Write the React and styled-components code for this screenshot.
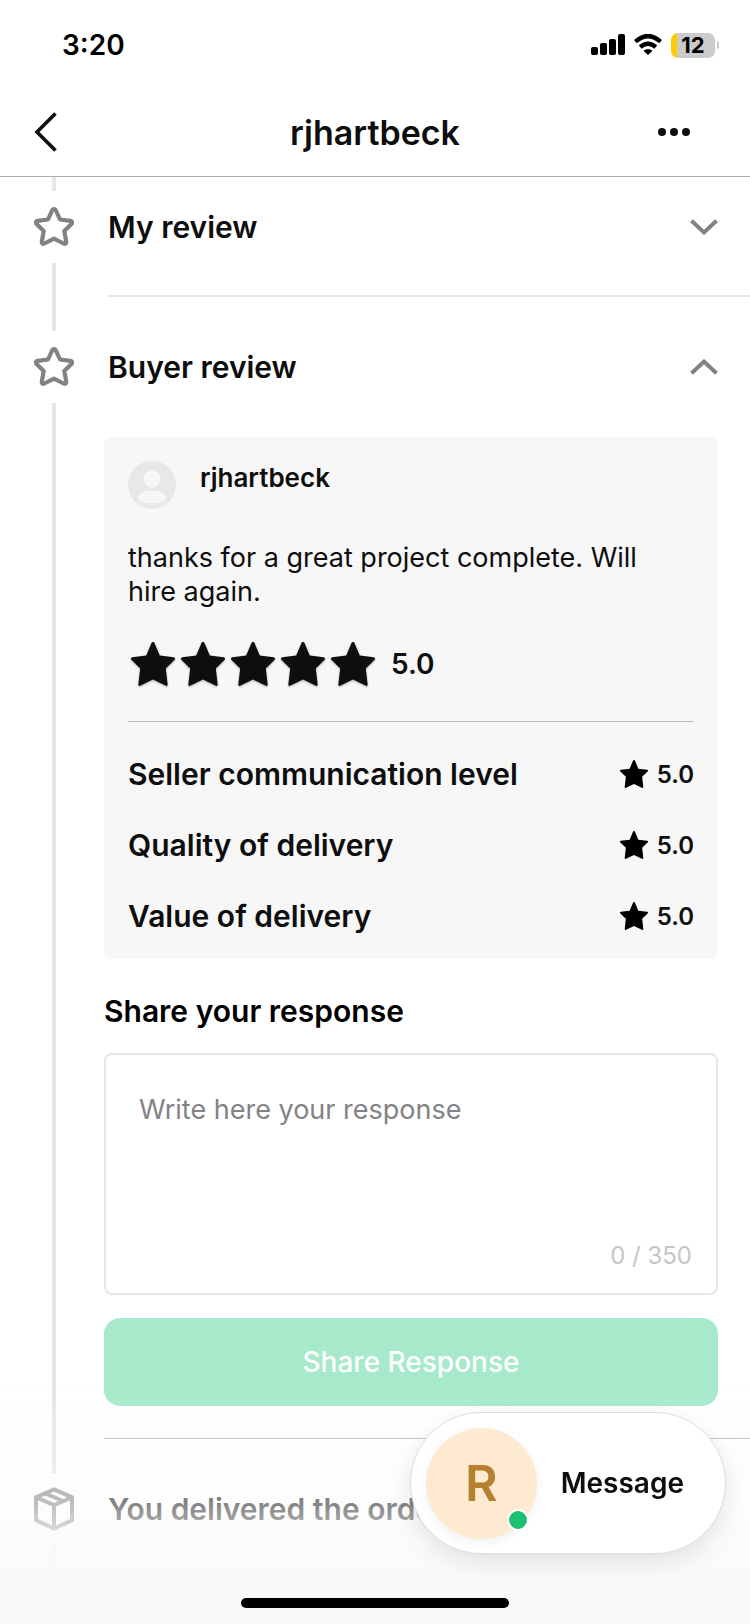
import React, { useState } from "react";
import styled, { createGlobalStyle } from "styled-components";

const theme = {
  text: "#0e0e0f",
  icon: "#808285",
  muted: "#818386",
  rule: "#e6e6e7",
  hairline: "#b9babb",
  card: "#f7f7f7",
  mint: "#a6eacb",
};

const STAR =
  "M20 2.2 C20.9 2.2 21.5 2.7 21.9 3.5 L26 12.5 L36.3 13.8 C38.2 14.1 38.7 15.8 37.4 17.1 L30.3 24 L32.2 34.6 C32.5 36.5 31.2 37.4 29.6 36.5 L20 31.6 L10.4 36.5 C8.8 37.4 7.5 36.5 7.8 34.6 L9.7 24 L2.6 17.1 C1.3 15.8 1.8 14.1 3.7 13.8 L14 12.5 L18.1 3.5 C18.5 2.7 19.1 2.2 20 2.2 Z";

const SOLID_STAR =
  "M22 0 C22.8 0 23.3 .5 23.6 1.2 L28.8 13.6 L42.6 15.3 C44.2 15.6 44.5 16.9 43.4 17.9 L34.8 26.4 L36.6 42 C36.8 43.6 35.9 44.4 34.4 43.6 L22 37.6 L9.6 43.6 C8.1 44.4 7.2 43.6 7.4 42 L9.2 26.4 L.6 17.9 C-.5 16.9 -.2 15.6 1.4 15.3 L15.2 13.6 L20.4 1.2 C20.7 .5 21.2 0 22 0 Z";

const ratings = [
  { label: "Seller communication level", score: "5.0" },
  { label: "Quality of delivery", score: "5.0" },
  { label: "Value of delivery", score: "5.0" },
];

const OutlineStar = () => (
  <svg width="40" height="40" viewBox="0 0 40 40" aria-hidden="true">
    <path d={STAR} fill="none" stroke={theme.icon} strokeWidth="4.2" strokeLinejoin="round" />
  </svg>
);

const SolidStar = ({ size, color }) => (
  <svg width={size} height={size} viewBox="0 0 44 44" aria-hidden="true">
    <path d={SOLID_STAR} fill={color} />
  </svg>
);

const BoxIcon = () => (
  <svg width="40" height="44" viewBox="0 0 40 44" fill="none" stroke={theme.icon} strokeWidth="4" aria-hidden="true">
    <path d="M20 2.4 L38 10.4 V33.2 L20 41.6 L2 33.2 V10.4 Z" />
    <path d="M2 10.4 L20 18 L38 10.4 M20 18 V41" />
    <path d="M10.5 6.2 L29 14" strokeWidth="4" />
  </svg>
);

const Chevron = ({ up }) => (
  <svg width="28" height="16" viewBox="0 0 28 16" aria-hidden="true">
    <path d={up ? "M1.5 14.2 L14 2.6 L26.5 14.2" : "M1.5 1.8 L14 13.4 L26.5 1.8"} fill="none" stroke={theme.icon} strokeWidth="4" />
  </svg>
);

const StatusBar = () => (
  <Status>
    <Time>3:20</Time>
    <StatusIcons>
      <svg width="34" height="22" viewBox="0 0 34 22" aria-hidden="true">
        <rect x="0" y="13" width="7" height="8" rx="2" />
        <rect x="9" y="9" width="7" height="12" rx="2" />
        <rect x="18" y="5" width="7" height="16" rx="2" />
        <rect x="27" y="0" width="7" height="21" rx="2" />
      </svg>
      <svg width="28" height="22" viewBox="0 0 28 22" fill="none" stroke="#000" strokeWidth="4.4" aria-hidden="true">
        <path d="M1.4 7.6 Q14 -3.4 26.6 7.6" />
        <path d="M6.2 13 Q14 6.4 21.8 13" />
        <path d="M14 21 L9.4 16.8 Q14 13.2 18.6 16.8 Z" fill="#000" stroke="none" />
      </svg>
      <Battery>
        <BatteryBody>12</BatteryBody>
        <BatteryTip />
      </Battery>
    </StatusIcons>
  </Status>
);

const App = () => {
  const [response, setResponse] = useState("");
  return (
    <Page>
      <GlobalStyle />
      <TopBar>
        <StatusBar />
        <NavRow>
          <IconButton aria-label="Back">
            <svg width="24" height="40" viewBox="0 0 24 40" aria-hidden="true">
              <path d="M21.5 1.5 L3 20 L21.5 38.5" fill="none" stroke={theme.text} strokeWidth="3.6" />
            </svg>
          </IconButton>
          <Title>rjhartbeck</Title>
          <MenuButton aria-label="More options">
            <svg width="32" height="8" viewBox="0 0 32 8" fill={theme.text} aria-hidden="true">
              <circle cx="4" cy="4" r="4" />
              <circle cx="16" cy="4" r="4" />
              <circle cx="28" cy="4" r="4" />
            </svg>
          </MenuButton>
        </NavRow>
      </TopBar>

      <Timeline>
        <LeadLine />
        <Step>
          <Rail>
            <RailIcon>
              <OutlineStar />
            </RailIcon>
            <RailLine />
          </Rail>
          <StepBody>
            <StepHeader aria-expanded="false">
              My review
              <Chevron />
            </StepHeader>
            <StepDivider />
          </StepBody>
        </Step>

        <Step>
          <Rail>
            <RailIcon>
              <OutlineStar />
            </RailIcon>
            <RailLine />
          </Rail>
          <StepBody>
            <StepHeader aria-expanded="true">
              Buyer review
              <Chevron up />
            </StepHeader>
            <Panel>
              <Card>
                <Reviewer>
                  <svg width="48" height="48" viewBox="0 0 48 48" aria-hidden="true">
                    <circle cx="24" cy="24" r="24" fill="#e8e8e9" />
                    <circle cx="24" cy="18" r="8.5" fill={theme.card} />
                    <ellipse cx="24" cy="36" rx="14" ry="6.5" fill={theme.card} />
                  </svg>
                  <ReviewerName>rjhartbeck</ReviewerName>
                </Reviewer>
                <Quote>thanks for a great project complete. Will hire again.</Quote>
                <Overall>
                  <Stars>
                    {[1, 2, 3, 4, 5].map((n) => (
                      <SolidStar key={n} size={44} color={theme.text} />
                    ))}
                  </Stars>
                  <OverallScore>5.0</OverallScore>
                </Overall>
                <Ratings>
                  {ratings.map((rating) => (
                    <RatingRow key={rating.label}>
                      <RatingLabel>{rating.label}</RatingLabel>
                      <RatingScore>
                        <SolidStar size={28} color="#000" />
                        {rating.score}
                      </RatingScore>
                    </RatingRow>
                  ))}
                </Ratings>
              </Card>
              <ResponseLabel htmlFor="response">Share your response</ResponseLabel>
              <ResponseBox>
                <ResponseInput
                  id="response"
                  maxLength={350}
                  placeholder="Write here your response"
                  value={response}
                  onChange={(e) => setResponse(e.target.value)}
                />
                <Counter>{response.length} / 350</Counter>
              </ResponseBox>
              <ShareButton disabled={!response}>Share Response</ShareButton>
            </Panel>
            <PanelDivider />
          </StepBody>
        </Step>

        <Step>
          <Rail>
            <RailIcon>
              <BoxIcon />
            </RailIcon>
            <RailLine />
          </Rail>
          <StepBody>
            <StepHeader>You delivered the order</StepHeader>
          </StepBody>
        </Step>
      </Timeline>

      <BottomFade />
      <MessageButton>
        <Avatar>
          R
          <OnlineDot />
        </Avatar>
        Message
      </MessageButton>
      <HomeIndicator />
    </Page>
  );
};

const GlobalStyle = createGlobalStyle`
  * {
    box-sizing: border-box;
  }
  body {
    margin: 0;
    background: #fff;
    color: ${theme.text};
    font-family: Inter, "Liberation Sans", sans-serif;
  }
  button {
    padding: 0;
    border: none;
    background: none;
    color: inherit;
    font: inherit;
    cursor: pointer;
  }
  svg {
    display: block;
    flex-shrink: 0;
  }
`;

const Page = styled.div`
  min-height: 100vh;
  overflow: hidden;
`;

const TopBar = styled.header`
  background: #fff;
  border-bottom: 1px solid #adaeaf;
`;

const Status = styled.div`
  display: flex;
  align-items: center;
  justify-content: space-between;
  height: 88px;
  padding: 2px 31px 0 62px;
`;

const Time = styled.span`
  color: #000;
  font-size: 28px;
  font-weight: 600;
`;

const StatusIcons = styled.div`
  display: flex;
  align-items: center;
  gap: 9px;
`;

const Battery = styled.div`
  display: flex;
  align-items: center;
  gap: 2px;
`;

const BatteryBody = styled.span`
  width: 44px;
  height: 25px;
  border-radius: 7px;
  background: linear-gradient(to right, #fc0 6px, #cbcbcb 6px);
  color: #000;
  font-size: 22px;
  font-weight: 700;
  line-height: 25px;
  text-align: center;
`;

const BatteryTip = styled.span`
  width: 2px;
  height: 8px;
  border-radius: 0 2px 2px 0;
  background: #cbcbcb;
`;

const NavRow = styled.div`
  display: grid;
  grid-template-columns: 80px 1fr 80px;
  align-items: center;
  height: 88px;
  padding: 0 34px;
`;

const IconButton = styled.button`
  justify-self: start;
`;

const MenuButton = styled.button`
  justify-self: end;
  && {
    padding: 24px 26px;
  }
`;

const Title = styled.h1`
  margin: 0;
  font-size: 34px;
  font-weight: 600;
  text-align: center;
`;

const Timeline = styled.main`
  display: flex;
  flex-direction: column;
`;

const LeadLine = styled.div`
  width: 4px;
  height: 14px;
  margin-left: 52px;
  background: ${theme.rule};
`;

const Step = styled.section`
  display: flex;
`;

const Rail = styled.div`
  display: flex;
  flex-direction: column;
  align-items: center;
  flex-shrink: 0;
  width: 40px;
  margin: 0 30px 0 34px;
`;

const RailIcon = styled.div`
  display: flex;
  align-items: center;
  height: 72px;
`;

const RailLine = styled.div`
  flex: 1;
  width: 4px;
  min-height: 17px;
  background: ${theme.rule};
`;

const StepBody = styled.div`
  flex: 1;
  min-width: 0;
`;

const StepHeader = styled.button`
  display: flex;
  align-items: center;
  justify-content: space-between;
  width: 100%;
  height: 72px;
  && {
    padding: 0 32px 0 4px;
    font-size: 30px;
    font-weight: 600;
  }
`;

const StepDivider = styled.div`
  height: 2px;
  margin: 32px 0 34px 4px;
  background: ${theme.rule};
`;

const Panel = styled.div`
  display: flex;
  flex-direction: column;
  padding: 34px 32px 32px 0;
`;

const Card = styled.article`
  padding: 24px 24px 25px;
  border-radius: 8px;
  background: ${theme.card};
`;

const Reviewer = styled.div`
  display: flex;
  gap: 24px;
`;

const ReviewerName = styled.h2`
  margin: 0;
  font-size: 26px;
  font-weight: 600;
  line-height: 34px;
`;

const Quote = styled.p`
  margin: 32px 0;
  padding-right: 32px;
  font-size: 27px;
  line-height: 34px;
`;

const Overall = styled.div`
  display: flex;
  align-items: center;
  gap: 16px;
  padding: 0 3px 34px;
  height: 80px;
`;

const Stars = styled.div`
  display: flex;
  gap: 6px;
  filter: drop-shadow(0 1px 1px rgba(0, 0, 0, 0.3));
`;

const OverallScore = styled.span`
  font-size: 28px;
  font-weight: 600;
`;

const Ratings = styled.div`
  display: flex;
  flex-direction: column;
  gap: 35px;
  padding-top: 34px;
  border-top: 1px solid ${theme.hairline};
`;

const RatingRow = styled.div`
  display: flex;
  align-items: center;
  justify-content: space-between;
`;

const RatingLabel = styled.span`
  font-size: 30px;
  font-weight: 600;
  line-height: 36px;
`;

const RatingScore = styled.span`
  display: flex;
  align-items: center;
  gap: 9px;
  font-size: 24px;
  font-weight: 600;
`;

const ResponseLabel = styled.label`
  margin: 34px 0 24px;
  color: #000;
  font-size: 30px;
  font-weight: 600;
  line-height: 36px;
`;

const ResponseBox = styled.div`
  display: flex;
  flex-direction: column;
  height: 242px;
  padding: 38px 24px 20px 33px;
  border: 2px solid ${theme.rule};
  border-radius: 8px;
`;

const ResponseInput = styled.textarea`
  flex: 1;
  padding: 0;
  border: none;
  outline: none;
  resize: none;
  background: none;
  color: ${theme.text};
  font: 27px/34px Inter, "Liberation Sans", sans-serif;

  &::placeholder {
    color: ${theme.muted};
  }
`;

const Counter = styled.span`
  align-self: flex-end;
  color: #c5c6c7;
  font-size: 24px;
  line-height: 34px;
`;

const ShareButton = styled.button`
  height: 88px;
  margin-top: 23px;
  border-radius: 16px;
  && {
    background: ${theme.mint};
    color: #fff;
    font-size: 28px;
    font-weight: 500;
  }
`;

const PanelDivider = styled.div`
  height: 1px;
  margin-bottom: 34px;
  background: ${theme.hairline};
`;

// fades the end of the timeline out under the floating button
const BottomFade = styled.div`
  position: fixed;
  right: 0;
  bottom: 0;
  left: 0;
  height: 240px;
  background: linear-gradient(
    rgba(250, 250, 250, 0),
    rgba(251, 251, 251, 0.5) 50%,
    rgba(250, 250, 250, 1) 76%
  );
  pointer-events: none;
`;

const MessageButton = styled.button`
  position: fixed;
  right: 24px;
  bottom: 70px;
  display: flex;
  align-items: center;
  gap: 24px;
  height: 142px;
  border-radius: 71px;
  box-shadow: 0 8px 24px rgba(0, 0, 0, 0.1);
  && {
    padding: 0 41px 0 15px;
    border: 1px solid #dcdcdc;
    background: #fff;
    font-size: 28px;
    font-weight: 600;
  }
`;

const Avatar = styled.span`
  position: relative;
  display: flex;
  align-items: center;
  justify-content: center;
  width: 111px;
  height: 111px;
  border-radius: 50%;
  background: #fdead0;
  box-shadow: 0 4px 12px rgba(0, 0, 0, 0.06);
  color: #b68031;
  font-size: 50px;
  font-weight: 600;
`;

const OnlineDot = styled.span`
  position: absolute;
  right: 8px;
  bottom: 8px;
  width: 22px;
  height: 22px;
  border: 2px solid #fff;
  border-radius: 50%;
  background: #1dbf73;
`;

const HomeIndicator = styled.div`
  position: fixed;
  bottom: 16px;
  left: 50%;
  width: 268px;
  height: 10px;
  margin-left: -134px;
  border-radius: 5px;
  background: #000;
`;

export default App;
